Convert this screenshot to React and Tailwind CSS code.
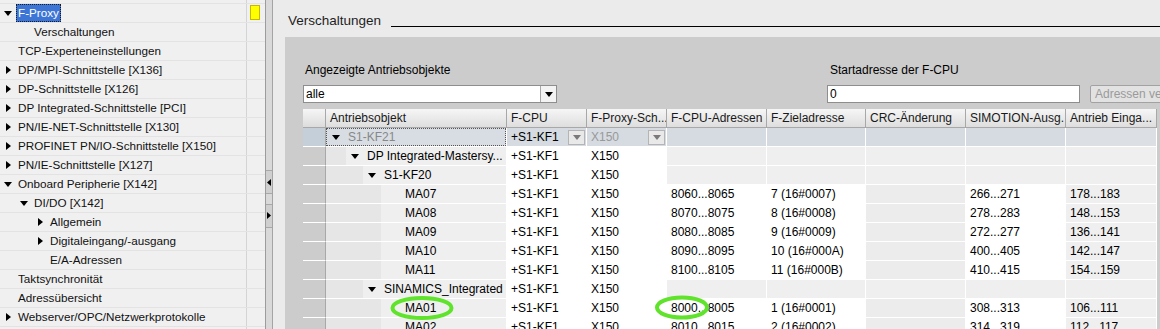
import React from "react";

const treeItems = [
  { label: "F-Proxy", level: 0, arrow: "down", selected: true, flag: true },
  { label: "Verschaltungen", level: 1 },
  { label: "TCP-Experteneinstellungen", level: 0 },
  { label: "DP/MPI-Schnittstelle [X136]", level: 0, arrow: "right" },
  { label: "DP-Schnittstelle [X126]", level: 0, arrow: "right" },
  { label: "DP Integrated-Schnittstelle [PCI]", level: 0, arrow: "right" },
  { label: "PN/IE-NET-Schnittstelle [X130]", level: 0, arrow: "right" },
  { label: "PROFINET PN/IO-Schnittstelle [X150]", level: 0, arrow: "right" },
  { label: "PN/IE-Schnittstelle [X127]", level: 0, arrow: "right" },
  { label: "Onboard Peripherie [X142]", level: 0, arrow: "down" },
  { label: "DI/DO [X142]", level: 1, arrow: "down" },
  { label: "Allgemein", level: 2, arrow: "right" },
  { label: "Digitaleingang/-ausgang", level: 2, arrow: "right" },
  { label: "E/A-Adressen", level: 2 },
  { label: "Taktsynchronität", level: 0 },
  { label: "Adressübersicht", level: 0 },
  { label: "Webserver/OPC/Netzwerkprotokolle", level: 0, arrow: "right" },
  { label: "", level: 0 },
];

const treePad = { 0: "pl-0", 1: "pl-[16px]", 2: "pl-[32px]" };

const columns = [
  { label: "Antriebsobjekt", w: "w-[181px]" },
  { label: "F-CPU", w: "w-[80px]" },
  { label: "F-Proxy-Sch...", w: "w-[80px]" },
  { label: "F-CPU-Adressen", w: "w-[100px]" },
  { label: "F-Zieladresse", w: "w-[99px]" },
  { label: "CRC-Änderung", w: "w-[100px]" },
  { label: "SIMOTION-Ausg.", w: "w-[100px]" },
  { label: "Antrieb Einga...", w: "w-[91px]" },
];

const rows = [
  { type: "sel", name: "S1-KF21", level: 0, arrow: true },
  { type: "group", name: "DP Integrated-Mastersy...", level: 1, arrow: true },
  { type: "group", name: "S1-KF20", level: 2, arrow: true },
  { type: "ma", name: "MA07", level: 3, adr: "8060...8065", ziel: "7 (16#0007)", sim: "266...271", an: "178...183" },
  { type: "ma", name: "MA08", level: 3, adr: "8070...8075", ziel: "8 (16#0008)", sim: "278...283", an: "148...153" },
  { type: "ma", name: "MA09", level: 3, adr: "8080...8085", ziel: "9 (16#0009)", sim: "272...277", an: "136...141" },
  { type: "ma", name: "MA10", level: 3, adr: "8090...8095", ziel: "10 (16#000A)", sim: "400...405", an: "142...147" },
  { type: "ma", name: "MA11", level: 3, adr: "8100...8105", ziel: "11 (16#000B)", sim: "410...415", an: "154...159" },
  { type: "group", name: "SINAMICS_Integrated", level: 2, arrow: true },
  { type: "ma", name: "MA01", level: 3, adr: "8000...8005", ziel: "1 (16#0001)", sim: "308...313", an: "106...111" },
  { type: "ma", name: "MA02", level: 3, adr: "8010...8015", ziel: "2 (16#0002)", sim: "314...319", an: "112...117" },
];

const indentW = { 0: "w-0", 1: "w-[20px]", 2: "w-[37px]", 3: "w-[55px]" };

function TriDown({ color = "#000" }) {
  return (
    <svg width="8" height="5" viewBox="0 0 8 5">
      <path d="M0 0 L8 0 L4 5 Z" fill={color} />
    </svg>
  );
}

function TriRight() {
  return (
    <svg width="5" height="8" viewBox="0 0 5 8">
      <path d="M0 0 L5 4 L0 8 Z" fill="#000" />
    </svg>
  );
}

function TriLeft() {
  return (
    <svg width="4" height="7" viewBox="0 0 4 7">
      <path d="M4 0 L0 3.5 L4 7 Z" fill="#000" />
    </svg>
  );
}

function TreeRow({ item }) {
  return (
    <div className="flex h-[19px] border-b border-[#e3e3e3]">
      <div className={`w-[246px] flex items-center ${treePad[item.level]}`}>
        <div className="w-[16px] flex justify-center items-center">
          {item.arrow === "down" && <TriDown />}
          {item.arrow === "right" && <TriRight />}
        </div>
        <span
          className={
            item.selected
              ? "px-[1px] leading-[16px] border border-dotted border-[#1a1a1a] bg-[#3d75d6] text-white"
              : "px-[1px] leading-[16px] border border-transparent text-[#111]"
          }
        >
          {item.label}
        </span>
      </div>
      <div className="w-[19px] border-l border-[#d4d4d4] pl-[3px] pt-[1px]">
        {item.flag && <div className="w-[10px] h-[15px] bg-[#ffff00] border border-[#c8b800]" />}
      </div>
    </div>
  );
}

function CellDrop() {
  return (
    <div className="ml-auto mr-[1px] w-[17px] h-[15px] bg-[#e9e9e9] border border-[#b4b4b4] flex items-center justify-center">
      <TriDown color="#7a7a7a" />
    </div>
  );
}

function DataRow({ row }) {
  const sel = row.type === "sel";
  const white = sel ? "bg-[#d5dbe1]" : "bg-white";
  const gray = sel ? "bg-[#d5dbe1]" : "bg-[#efefef]";
  const crc = sel ? "bg-[#d5dbe1]" : "bg-[#ececec]";
  const ma = row.type === "ma";
  const cell = "h-[19px] border-r border-b border-white flex items-center pl-[4px] whitespace-nowrap overflow-hidden";
  return (
    <div className="flex">
      <div className={`w-[23px] h-[19px] border-r border-[#a8a8a8] border-b border-b-white ${sel ? "bg-[#c5cfd9]" : "bg-[#cccccc]"}`} />
      <div className={`w-[181px] h-[19px] border-r border-b border-white flex ${sel ? "bg-[#d7dde3]" : "bg-[#efefef]"}`}>
        <div className={`${indentW[row.level]} h-full bg-[#e6e6e6]`} />
        <div
          className={`flex-1 flex items-center pl-[5px] ${
            sel ? "border border-dotted border-[#555] text-[#888]" : "text-black"
          }`}
        >
          <div className="w-[16px] flex items-center">{row.arrow && <TriDown />}</div>
          <span className={row.level === 3 ? "pl-[3px]" : "pl-0"}>{row.name}</span>
        </div>
      </div>
      <div className={`w-[80px] pr-0 ${cell} ${white}`}>
        <span>+S1-KF1</span>
        {sel && <CellDrop />}
      </div>
      <div className={`w-[80px] ${cell} ${white}`}>
        <span className={sel ? "text-[#999]" : "text-black"}>X150</span>
        {sel && <CellDrop />}
      </div>
      <div className={`w-[100px] ${cell} ${ma ? white : gray}`}>{ma ? row.adr : ""}</div>
      <div className={`w-[99px] ${cell} ${ma ? white : gray}`}>{ma ? row.ziel : ""}</div>
      <div className={`w-[100px] ${cell} ${ma ? crc : gray}`} />
      <div className={`w-[100px] ${cell} ${ma ? white : gray}`}>{ma ? row.sim : ""}</div>
      <div className={`w-[91px] ${cell} ${sel ? "bg-[#dce0e4]" : "bg-[#efefef]"}`}>{ma ? row.an : ""}</div>
    </div>
  );
}

export default function App() {
  return (
    <div
      className="relative w-[1160px] h-[329px] overflow-hidden flex text-[12px] text-black bg-[#ebebeb]"
      style={{ fontFamily: '"Liberation Sans", Arial, sans-serif' }}
    >
      {/* project tree */}
      <div className="w-[266px] h-full shrink-0 bg-[#f0f0f0] border-r border-[#9c9c9c] overflow-hidden text-[11.7px]">
        <div className="flex h-[4px] border-b border-[#e3e3e3]">
          <div className="w-[246px]" />
          <div className="w-[19px] border-l border-[#d4d4d4]" />
        </div>
        {treeItems.map((item, i) => (
          <TreeRow key={i} item={item} />
        ))}
      </div>

      {/* splitter */}
      <div className="w-[7px] h-full shrink-0 bg-[#d9d9d9] border-r border-[#a4a4a4] flex flex-col">
        <div className="mt-[170px] h-[24px] bg-[#cfcfcf] border-y border-[#a8a8a8] flex items-center pl-[1px]">
          <TriLeft />
        </div>
        <div className="mt-[10px] h-[24px] bg-[#cfcfcf] border-y border-[#a8a8a8] flex items-center pl-[1px] rotate-180">
          <TriLeft />
        </div>
      </div>

      {/* main editor */}
      <div className="flex-1 h-full flex flex-col min-w-0">
        <div className="h-[37px] shrink-0 flex items-start pt-[12px] pl-[15px]">
          <span className="text-[13.5px] leading-[17px] text-[#1e1e1e]">Verschaltungen</span>
          <div className="flex-1 ml-[10px] h-[15px] border-b border-black" />
        </div>

        <div className="flex-1 ml-[12px] bg-[#cccccc] pl-[18px] pt-[26px] overflow-hidden">
          <div className="flex">
            <div className="w-[254px] shrink-0">
              <div className="pl-[2px] leading-[14px]">Angezeigte Antriebsobjekte</div>
              <div className="mt-[8px] h-[18px] bg-white border border-[#8e8e8e] flex items-center">
                <span className="pl-[2px] flex-1">alle</span>
                <div className="w-[16px] h-full border-l border-[#a8a8a8] bg-[#f3f3f3] flex items-center justify-center">
                  <TriDown />
                </div>
              </div>
            </div>
            <div className="ml-[270px] w-[253px] shrink-0">
              <div className="pl-[3px] leading-[14px]">Startadresse der F-CPU</div>
              <div className="mt-[8px] h-[18px] bg-white border border-[#8e8e8e] flex items-center pl-[2px]">0</div>
            </div>
            <div className="ml-[10px] shrink-0 w-[120px] flex flex-col">
              <div className="h-[14px]" />
              <div className="mt-[8px] h-[18px] bg-[#e2e2e2] border border-[#a2a2a2] rounded-[2px] pl-[4px] flex items-center text-[#9a9a9a] whitespace-nowrap">
                Adressen verschalten
              </div>
            </div>
          </div>

          {/* table */}
          <div className="mt-[6px]">
            <div className="flex h-[19px]">
              <div className="w-[23px] h-full border-r border-b border-[#a8a8a8] bg-gradient-to-b from-[#f6f6f6] to-[#dcdcdc]" />
              {columns.map((c, i) => (
                <div
                  key={i}
                  className={`${c.w} h-full border-r border-b border-[#a8a8a8] bg-gradient-to-b from-[#f6f6f6] to-[#dedede] flex items-center pl-[4px] whitespace-nowrap overflow-hidden text-[#1a1a1a]`}
                >
                  {c.label}
                </div>
              ))}
            </div>
            {rows.map((r, i) => (
              <DataRow key={i} row={r} />
            ))}
          </div>
        </div>
      </div>

      {/* annotation marks */}
      <svg className="absolute left-0 top-0 pointer-events-none" width="1160" height="329">
        <ellipse cx="422" cy="308" rx="29.5" ry="10" fill="none" stroke="#5fe32b" strokeWidth="4" />
        <ellipse cx="682" cy="307.5" rx="25" ry="10" fill="none" stroke="#5fe32b" strokeWidth="4" />
      </svg>
    </div>
  );
}
